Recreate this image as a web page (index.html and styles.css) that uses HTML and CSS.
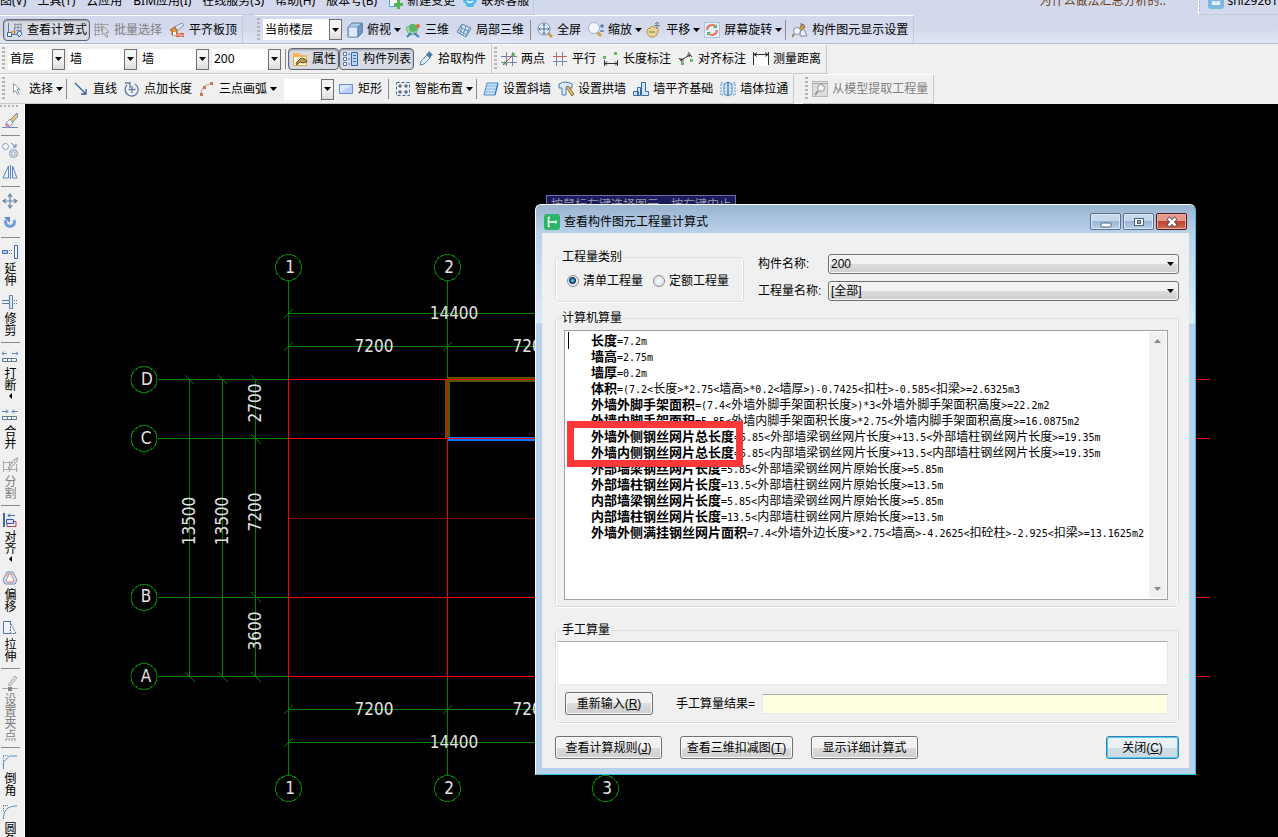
FILE: index.html
```html
<!DOCTYPE html>
<html lang="zh-CN">
<head>
<meta charset="utf-8">
<meta name="viewport" content="width=device-width, initial-scale=1">
<title>查看构件图元工程量计算式</title>
<link rel="stylesheet" href="styles.css">
</head>
<body>
<svg class="sprite" aria-hidden="true">
  <symbol id="caret" viewBox="0 0 7 4"><path d="M0 0h7L3.500 4z" fill="currentColor"/></symbol>
  <symbol id="new-doc" viewBox="0 0 16 16"><path d="M1.500 1v12.500h9V1" fill="#fff" stroke="#4d9fd8"/><path d="M9 7h3v3h3v3h-3v3H9v-3H6v-3h3z" fill="#4fb548"/></symbol>
  <symbol id="service" viewBox="0 0 16 16"><path d="M2 5h12l1 4-2 1-2 4H5l-2-4-2-1z" fill="#4dbbe9"/><path d="M5 8q3 3 6 0" fill="none" stroke="#fff" stroke-width="1.500"/></symbol>
  <symbol id="user" viewBox="0 0 16 16"><rect width="16" height="16" rx="3" fill="#7cb9dc"/><path d="M4 8h3l1 2 1-2h3v4H4z" fill="#e5f4fc"/></symbol>
  <symbol id="formula" viewBox="0 0 16 16"><path d="M1.500 1v12M1 12.500h14M7.500 6v6" stroke="#5578b6" fill="none"/><path d="M7 2.500h8M7 5.500h8M9 8.500h6M8 1v6M11 1v9M14 1v9" stroke="#8a94a8" fill="none"/><path d="M.5 10.500h4v4h-4zM10 11l3-2 2 3-3 3z" fill="#f3f8ff" stroke="#2e62b8"/><path d="M4 9h5v2H4z" fill="#e59b36"/></symbol>
  <symbol id="batch" viewBox="0 0 16 16"><path d="M1.500 1v13M4.500 1v10M7.500 1v8M0 2.500h15M0 5.500h9M0 8.500h9M0 12.500h6" stroke="#a0a0a6" fill="none"/><path d="M9 4l6 6-3 .5 2 4-2 .5-2-4-2 2z" fill="#ddd" stroke="#9a9aa0"/></symbol>
  <symbol id="level" viewBox="0 0 16 16"><path d="M5 5l8-4 2 2-7 6z" fill="#dfe8f7" stroke="#8292b8"/><path d="M1 8l5-3 2 3v5H3V9z" fill="#e3923a" stroke="#a9602a"/><path d="M4 10h3v3H4z" fill="#fff"/><path d="M7 11h8v4H7z" fill="#c9604e"/><path d="M7 13h8M10 11v2M12 13v2" stroke="#f2c4b0"/></symbol>
  <symbol id="cube" viewBox="0 0 16 16"><path d="M1 5l4-4h10v10l-4 4H1z" fill="#a9cbec" stroke="#5a7898"/><path d="M1.500 5h9.500v10H1.500z" fill="#dcebfb" stroke="#7f9fc2"/><path d="M11 5l4-4v10l-4 4z" fill="#6f9ccc" stroke="#5a7898"/></symbol>
  <symbol id="orbit" viewBox="0 0 16 16"><path d="M1 6l6-4 6 4-2 6-7 1z" fill="#a9d7a0" stroke="#6fae7c"/><circle cx="8" cy="6" r="4" fill="#57b66a"/><circle cx="13" cy="4" r="2" fill="#e06d3e"/><path d="M2 15l4-4M9 11l5 4" stroke="#3f7fc0" stroke-width="2"/></symbol>
  <symbol id="part3d" viewBox="0 0 16 16"><path d="M1 10l5-8 9 4-5 9z" fill="#d0e4f4" stroke="#5d87ad"/><path d="M4 5.500l9 4M6 3l-2 9M10 4l-3 9M13 6l-3 8M2 8l9 5" stroke="#6692b8" fill="none"/></symbol>
  <symbol id="fit" viewBox="0 0 16 16"><path d="M11 11l4 4" stroke="#c99a3e" stroke-width="2.500"/><circle cx="7" cy="7" r="6" fill="#eef4fc" stroke="#6e8eb8"/><path d="M7 2v10M2 7h10M5.500 3.500L7 2l1.500 1.500M5.500 10.500L7 12l1.500-1.500M3.500 5.500L2 7l1.500 1.500M10.500 5.500L12 7l-1.500 1.500" stroke="#446fa7" fill="none"/></symbol>
  <symbol id="zoom" viewBox="0 0 16 16"><path d="M9 10l4 4" stroke="#d5a445" stroke-width="3"/><circle cx="6" cy="6" r="5.500" fill="#f2f7fd" stroke="#9cb4d2"/><path d="M12 4h4M14 2v4M12 9h4" stroke="#5a81b5" stroke-width="1.500"/></symbol>
  <symbol id="pan" viewBox="0 0 16 16"><path d="M1 9c0-3 2-3 3-2 0-3 3-3 4-1 2-2 5 0 4 3-1 5-3 6-6 6S1 13 1 9z" fill="#ecd58d" stroke="#b2924a"/><path d="M11 0v7M8 3.500h6M9 2l2-2 2 2M3 10h6" stroke="#777d8e" fill="none"/></symbol>
  <symbol id="spin" viewBox="0 0 16 16"><rect x=".5" y=".5" width="15" height="15" fill="#e4eff7" stroke="#a8c6dc"/><path d="M3 8a5 5 0 0 1 9-3M13 8a5 5 0 0 1-9 3" fill="none" stroke="#e07858" stroke-width="2"/><path d="M13 2v4H9zM3 14v-4h4z" fill="#63af72"/></symbol>
  <symbol id="display" viewBox="0 0 16 16"><path d="M9 1l6 13H8z" fill="#eaf0f8" stroke="#7890b2"/><path d="M11 2l2 3-5 5-2-2z" fill="#d0a04a" stroke="#86662d"/><circle cx="5" cy="9" r="3.500" fill="#f4f9ff" stroke="#7892b7"/><path d="M2 12l-2 3" stroke="#9c7a4b" stroke-width="2"/></symbol>
  <symbol id="props" viewBox="0 0 16 16"><path d="M1.500 14.500v-12h5l1 2h7v10z" fill="#fff6dc" stroke="#e1a33d"/><path d="M1 2h6l1 2h7v2H1z" fill="#f3b54e"/><path d="M4 12l5-5 4 1 2 3-4 1-3-1-3 3z" fill="#b99a4f" stroke="#6c5729"/></symbol>
  <symbol id="list" viewBox="0 0 16 16"><path d="M.5 1.500h3v3h-3zM.5 6.500h3v3h-3zM.5 11.500h3v3h-3zM5 3h2M5 8h2M5 13h2" fill="#fff" stroke="#5474a5"/><path d="M8.500 1.500h6v13h-6z" fill="#bcd4f5" stroke="#3566aa"/><path d="M10 4.500h3M10 7.500h3M10 10.500h3" stroke="#3468b5"/></symbol>
  <symbol id="pick" viewBox="0 0 16 16"><path d="M2 14l1-4 6-6 3 3-6 6z" fill="#e2f1fb" stroke="#5286b4"/><path d="M8 3l2-1 1-2 4 4-2 1-1 3z" fill="#4f7ba8"/></symbol>
  <symbol id="two-pt" viewBox="0 0 16 16"><path d="M5.500 1v14M11.500 1v14M0 5.500h16M0 11.500h16" stroke="#7783a8"/><path d="M2 14L14 2" stroke="#b64545"/><circle cx="4" cy="12" r="1.700" fill="#55a855"/><circle cx="12" cy="4" r="1.700" fill="#55a855"/></symbol>
  <symbol id="parallel" viewBox="0 0 16 16"><path d="M4.500 1v14M10.500 1v14M1 10.500h14" stroke="#7783b0"/><path d="M1 5.500h14" stroke="#cf5b5b"/></symbol>
  <symbol id="length" viewBox="0 0 16 16"><path d="M1.500 9v6M14.500 9v6M2 12.500h12M4 10.500l-2 2 2 2M12 10.500l2 2-2 2" stroke="#333" fill="none"/><path d="M0 5h3v3H0zM11 1h3v3h-3z" fill="#64ba68"/></symbol>
  <symbol id="aligned" viewBox="0 0 16 16"><path d="M1 7l3 4M10 1l4 5M3 9l9-5M3 7v2h3M9 4h3l-1 2" stroke="#333" fill="none"/><path d="M3 11h3v3H3zM12 8h3v3h-3z" fill="#64ba68"/></symbol>
  <symbol id="measure" viewBox="0 0 16 16"><path d="M2 5h13v10H2z" fill="#fff"/><path d="M.5 1v13M15.500 1v13M1 3.500h14M4 1.500l-3 2 3 2M12 1.500l3 2-3 2" stroke="#333" fill="none"/></symbol>
  <symbol id="pointer" viewBox="0 0 16 16"><path d="M4.500 2.500v9l2-2 2 4 1.500-1-2-4h3z" fill="#fff" stroke="#8b9aac"/></symbol>
  <symbol id="line" viewBox="0 0 16 16"><path d="M2 2l11 11M13 8v5H8" stroke="#315fa2" fill="none" stroke-width="1.300"/></symbol>
  <symbol id="arc-len" viewBox="0 0 16 16"><path d="M3 4a6.500 6.500 0 1 0 8-1M1 2h5v5M8 5v7M4.500 8.500h7" stroke="#5c7ba6" fill="none" stroke-width="1.300"/></symbol>
  <symbol id="arc3" viewBox="0 0 16 16"><path d="M2 14C2 7 6 3 13 3" stroke="#96a0b5" fill="none"/><path d="M1 12h3v3H1zM4 5h3v3H4zM11 1h3v3h-3z" fill="#d37456"/></symbol>
  <symbol id="rect" viewBox="0 0 16 16"><path d="M1.500 3.500h13v9h-13z" fill="#b9d0fb" stroke="#6b8dd5"/><path d="M2 4h12L2 12z" fill="#d8e5ff"/></symbol>
  <symbol id="smart" viewBox="0 0 16 16"><path d="M1.500 1.500h13v13h-13z" fill="none" stroke="#426391" stroke-dasharray="3 2"/><path d="M5 3v4M3 5h4M11 3v4M9 5h4M5 9v4M3 11h4M11 9v4M9 11h4" stroke="#334d73"/></symbol>
  <symbol id="slant" viewBox="0 0 16 16"><path d="M1 14L4 2h11l-3 12z" fill="#c5e1f8" stroke="#4e8fc8"/><path d="M4 5h10M3 8h10M2 11h11" stroke="#82b5de"/><path d="M12 14l3-12" stroke="#326fa4"/></symbol>
  <symbol id="arch" viewBox="0 0 16 16"><path d="M1 3q7-4 13 0v4h-3q-2-3-3 0v7H4V7H1z" fill="#dbeaf8" stroke="#497bb0"/><path d="M8 6l2-1 6 8-2 2z" fill="#e7c072" stroke="#8e6a31"/></symbol>
  <symbol id="footing" viewBox="0 0 16 16"><path d="M.5 10.500h5v4h-5zM4.500 6.500h3v8h-3zM8.500 1.500h4v9h3v4h-7z" fill="#d3e5f8" stroke="#376ca7"/></symbol>
  <symbol id="through" viewBox="0 0 16 16"><path d="M3 2h-2v12h2M13 2h2v12h-2" fill="none" stroke="#4a91cd" stroke-dasharray="2 1"/><path d="M4 3l4-2v14l-4-2zM8 1l4 2v10l-4 2z" fill="#cfe6f9" stroke="#4a85b9"/></symbol>
  <symbol id="extract" viewBox="0 0 16 16"><path d="M.5.500h15v15H.5z" fill="#dedede" stroke="#b8b8b8"/><path d="M1 2.500h14" stroke="#aaa"/><circle cx="9" cy="7" r="3.500" fill="#f2f2f2" stroke="#969696"/><path d="M6 10l-3 4" stroke="#969696" stroke-width="2"/></symbol>
  <symbol id="erase" viewBox="0 0 16 16"><path d="M0 14.500h16" stroke="#6788b5"/><path d="M8 7l7-7 1 3-6 7z" fill="#e8c766" stroke="#7888a3"/><path d="M4 10l4-4 3 4-4 4z" fill="#edf3fc" stroke="#8396b5"/><path d="M3 11l2-1 3 3-2 2H4z" fill="#d08caf"/></symbol>
  <symbol id="copy" viewBox="0 0 16 16"><circle cx="3.500" cy="4.500" r="3" fill="#fff" stroke="#7d98b8"/><circle cx="11.500" cy="11.500" r="4" fill="#dfe6ef" stroke="#7d98b8"/><circle cx="11.500" cy="11.500" r="2" fill="none" stroke="#9fb2ca"/><path d="M9 1l5 4M14 2v3h-3" stroke="#517fb9" fill="none"/></symbol>
  <symbol id="mirror" viewBox="0 0 16 16"><path d="M6.500 2v12H1zM10.500 2v12H15z" fill="#edf4ff" stroke="#5d85bd"/><path d="M8.500 1v14" stroke="#5d85bd"/></symbol>
  <symbol id="move" viewBox="0 0 16 16"><path d="M8 1v14M1 8h14M6 4l2-3 2 3M6 12l2 3 2-3M4 6L1 8l3 2M12 6l3 2-3 2" stroke="#6484a8" fill="none" stroke-width="1.200"/></symbol>
  <symbol id="rotate" viewBox="0 0 16 16"><path d="M4 5a4.500 4.500 0 1 0 8 0" fill="none" stroke="#6d9be1" stroke-width="3"/><path d="M2 2h6v6z" fill="#5b89d2"/></symbol>
  <symbol id="extend" viewBox="0 0 16 16"><path d="M.5 6.500h5v3h-5z" fill="#b7cdf0" stroke="#3e6ca7"/><path d="M7 6.500h4M7 9.500h4" stroke="#56779f" stroke-dasharray="1 1"/><path d="M12.500 1.500h3v13h-3z" fill="#eef5ff" stroke="#3e6ca7"/></symbol>
  <symbol id="trim" viewBox="0 0 16 16"><path d="M0 6.500h7M0 9.500h7" stroke="#56779f"/><path d="M10 6.500h6M10 9.500h6" stroke="#56779f" stroke-dasharray="1 1"/><path d="M7.500 1.500h3v13h-3z" fill="#dce9f8" stroke="#5385ba"/></symbol>
  <symbol id="break" viewBox="0 0 16 16"><path d="M0 4.500h5M2 2.500l-2 2 2 2M10 4.500h6M14 2.500l2 2-2 2" stroke="#5983c5" fill="none"/><path d="M.5 9.500h14v3H.5zM5.500 9v4M9.500 9v4" fill="#fff" stroke="#58799c"/></symbol>
  <symbol id="join" viewBox="0 0 16 16"><path d="M0 4.500h6M4 2.500l2 2-2 2M16 4.500h-6M12 2.500l-2 2 2 2" stroke="#5983c5" fill="none"/><path d="M.5 9.500h14v3H.5zM5.500 9v4M9.500 9v4" fill="#fff" stroke="#58799c"/></symbol>
  <symbol id="split" viewBox="0 0 16 16"><path d="M1 5.500h9M1 12.500h15M1.500 4v11M7.500 4v11M14.500 7v8" stroke="#aaa"/><path d="M6 11l7-9 3-1-1 3-7 8z" fill="#e4e4e4" stroke="#999"/></symbol>
  <symbol id="align" viewBox="0 0 16 16"><path d="M2 1v14" stroke="#3f6998" stroke-width="2"/><path d="M6 3.500h7M8 1.500l-2 2 2 2" stroke="#4865b5" fill="none"/><path d="M4.500 7.500h7v4h-7z" fill="#dfe2ff" stroke="#384fc0"/><path d="M12 9.500h2v5H5v-3" fill="none" stroke="#b93b4b"/></symbol>
  <symbol id="offset" viewBox="0 0 16 16"><path d="M5 2h6l4 8-2 4H3l-2-4z" fill="#cfe3f3" stroke="#6d92b2" stroke-linejoin="round"/><path d="M6 4h4v3l2 3-1 2H5l-1-2 2-3z" fill="#fff" stroke="#df7373"/></symbol>
  <symbol id="stretch" viewBox="0 0 16 16"><path d="M9 1.500H1.500v12H9" fill="#f0f6ff" stroke="#4a78a9"/><path d="M8.500 1v4" stroke="#4a78a9"/><path d="M8.500 6v7M9 4l5 9.500H8" fill="none" stroke="#5377a0" stroke-dasharray="2 1"/></symbol>
  <symbol id="grip-pt" viewBox="0 0 16 16"><path d="M0 13.500h16" stroke="#aaa"/><path d="M6 12h4v4H6z" fill="#888"/><path d="M6 10l7-9 2 2-7 8z" fill="#ddd" stroke="#aaa"/></symbol>
  <symbol id="chamfer" viewBox="0 0 16 16"><path d="M1.500 15V8l6-6H15" stroke="#4f8fcc" fill="none"/><path d="M1 1.500h5M1.500 2v5" stroke="#5f86ab" stroke-dasharray="1 1"/></symbol>
  <symbol id="fillet" viewBox="0 0 16 16"><path d="M1.500 15c0-8 3-13 13.500-13" stroke="#4f8fcc" fill="none"/><path d="M1 1.500h5M1.500 2v5" stroke="#5f86ab" stroke-dasharray="1 1"/></symbol>
</svg>

<nav class="menu-row">
  <div class="menu">
    <button class="menu-item">图(V)</button>
    <button class="menu-item">工具(T)</button>
    <button class="menu-item">云应用</button>
    <button class="menu-item">BIM应用(I)</button>
    <button class="menu-item">在线服务(S)</button>
    <button class="menu-item">帮助(H)</button>
    <button class="menu-item">版本号(B)</button>
    <button class="menu-item"><svg class="icon"><use href="#new-doc"/></svg>新建变更</button>
    <button class="menu-item menu-service"><svg class="icon"><use href="#service"/></svg>联系客服</button>
  </div>
  <a class="faq" href="#">为什么做法汇总分析的..</a>
  <div class="account"><span class="grip"></span><button class="menu-item"><svg class="icon"><use href="#user"/></svg>shl29261</button></div>
</nav>

<div class="row row-blue">
  <div class="bar">
    <button class="tool pressed"><svg class="icon"><use href="#formula"/></svg>查看计算式</button>
    <button class="tool" disabled><svg class="icon"><use href="#batch"/></svg>批量选择</button>
    <button class="tool"><svg class="icon"><use href="#level"/></svg>平齐板顶</button>
  </div>
  <div class="bar bar-next">
    <span class="grip"></span>
    <span class="combo combo-view"><select aria-label="显示范围"><option>当前楼层</option></select><span class="combo-arrow"><svg class="caret"><use href="#caret"/></svg></span></span>
    <button class="tool"><svg class="icon"><use href="#cube"/></svg>俯视<svg class="caret"><use href="#caret"/></svg></button>
    <button class="tool"><svg class="icon"><use href="#orbit"/></svg>三维</button>
    <button class="tool"><svg class="icon"><use href="#part3d"/></svg>局部三维</button>
    <span class="sep"></span>
    <button class="tool"><svg class="icon"><use href="#fit"/></svg>全屏</button>
    <button class="tool"><svg class="icon"><use href="#zoom"/></svg>缩放<svg class="caret"><use href="#caret"/></svg></button>
    <button class="tool"><svg class="icon"><use href="#pan"/></svg>平移<svg class="caret"><use href="#caret"/></svg></button>
    <button class="tool"><svg class="icon"><use href="#spin"/></svg>屏幕旋转<svg class="caret"><use href="#caret"/></svg></button>
    <span class="sep"></span>
    <button class="tool"><svg class="icon"><use href="#display"/></svg>构件图元显示设置</button>
  </div>
</div>

<div class="row">
  <div class="bar">
    <span class="grip"></span>
    <span class="combo combo-floor"><select aria-label="楼层"><option>首层</option></select><span class="combo-arrow"><svg class="caret"><use href="#caret"/></svg></span></span>
    <span class="combo"><select aria-label="构件类别"><option>墙</option></select><span class="combo-arrow"><svg class="caret"><use href="#caret"/></svg></span></span>
    <span class="combo"><select aria-label="构件类型"><option>墙</option></select><span class="combo-arrow"><svg class="caret"><use href="#caret"/></svg></span></span>
    <span class="combo"><select aria-label="构件"><option>200</option></select><span class="combo-arrow"><svg class="caret"><use href="#caret"/></svg></span></span>
    <span class="sep"></span>
    <button class="tool pressed"><svg class="icon"><use href="#props"/></svg>属性</button>
    <button class="tool pressed"><svg class="icon"><use href="#list"/></svg>构件列表</button>
    <button class="tool"><svg class="icon"><use href="#pick"/></svg>拾取构件</button>
  </div>
  <div class="bar">
    <span class="grip"></span>
    <button class="tool"><svg class="icon"><use href="#two-pt"/></svg>两点</button>
    <button class="tool"><svg class="icon"><use href="#parallel"/></svg>平行</button>
    <button class="tool"><svg class="icon"><use href="#length"/></svg>长度标注</button>
    <button class="tool"><svg class="icon"><use href="#aligned"/></svg>对齐标注</button>
    <button class="tool"><svg class="icon"><use href="#measure"/></svg>测量距离</button>
  </div>
</div>

<div class="row">
  <div class="bar">
    <span class="grip"></span>
    <button class="tool"><svg class="icon"><use href="#pointer"/></svg>选择<svg class="caret"><use href="#caret"/></svg></button>
    <span class="sep"></span>
    <button class="tool"><svg class="icon"><use href="#line"/></svg>直线</button>
    <button class="tool"><svg class="icon"><use href="#arc-len"/></svg>点加长度</button>
    <button class="tool"><svg class="icon"><use href="#arc3"/></svg>三点画弧<svg class="caret"><use href="#caret"/></svg></button>
    <span class="combo combo-arc"><select aria-label="画弧方式"><option></option></select><span class="combo-arrow"><svg class="caret"><use href="#caret"/></svg></span></span>
    <button class="tool"><svg class="icon"><use href="#rect"/></svg>矩形</button>
    <span class="sep"></span>
    <button class="tool"><svg class="icon"><use href="#smart"/></svg>智能布置<svg class="caret"><use href="#caret"/></svg></button>
    <span class="sep"></span>
    <button class="tool"><svg class="icon"><use href="#slant"/></svg>设置斜墙</button>
    <button class="tool"><svg class="icon"><use href="#arch"/></svg>设置拱墙</button>
    <button class="tool"><svg class="icon"><use href="#footing"/></svg>墙平齐基础</button>
    <button class="tool"><svg class="icon"><use href="#through"/></svg>墙体拉通</button>
  </div>
  <div class="bar bar-next">
    <span class="grip"></span>
    <button class="tool" disabled><svg class="icon"><use href="#extract"/></svg>从模型提取工程量</button>
  </div>
</div>

<div class="workspace">
  <aside class="side">
    <span class="side-grip"></span>
    <button class="side-tool" aria-label="删除"><svg class="icon"><use href="#erase"/></svg></button>
    <span class="side-sep"></span>
    <button class="side-tool" aria-label="复制"><svg class="icon"><use href="#copy"/></svg></button>
    <button class="side-tool" aria-label="镜像"><svg class="icon"><use href="#mirror"/></svg></button>
    <span class="side-sep"></span>
    <button class="side-tool" aria-label="移动"><svg class="icon"><use href="#move"/></svg></button>
    <button class="side-tool" aria-label="旋转"><svg class="icon"><use href="#rotate"/></svg></button>
    <span class="side-sep"></span>
    <button class="side-tool named"><svg class="icon"><use href="#extend"/></svg><span class="vert">延伸</span></button>
    <button class="side-tool named"><svg class="icon"><use href="#trim"/></svg><span class="vert">修剪</span></button>
    <span class="side-sep"></span>
    <button class="side-tool named"><svg class="icon"><use href="#break"/></svg><span class="vert">打断</span><span class="side-more"></span></button>
    <button class="side-tool named"><svg class="icon"><use href="#join"/></svg><span class="vert">合并</span></button>
    <button class="side-tool named" disabled><svg class="icon"><use href="#split"/></svg><span class="vert">分割</span></button>
    <span class="side-sep"></span>
    <button class="side-tool named"><svg class="icon"><use href="#align"/></svg><span class="vert">对齐</span><span class="side-more"></span></button>
    <button class="side-tool named"><svg class="icon"><use href="#offset"/></svg><span class="vert">偏移</span></button>
    <button class="side-tool named"><svg class="icon"><use href="#stretch"/></svg><span class="vert">拉伸</span></button>
    <span class="side-sep"></span>
    <button class="side-tool named" disabled><svg class="icon"><use href="#grip-pt"/></svg><span class="vert">设置夹点</span></button>
    <span class="side-sep"></span>
    <button class="side-tool named"><svg class="icon"><use href="#chamfer"/></svg><span class="vert">倒角</span></button>
    <button class="side-tool named"><svg class="icon"><use href="#fillet"/></svg><span class="vert">圆角</span></button>
  </aside>

  <main class="canvas">
    <svg class="drawing" role="img" aria-label="轴网平面图">
      <g transform="translate(-25 -104)">
        <path class="axis" d="M288.500 281v98M447.500 281v98M288.500 676v99M447.500 676v99M605.500 676v99M157 379.500h131M157 438.500h131M157 597.500h131M157 676.500h131"/>
        <path class="axis" d="M288 313.500h317M288 346.500h317M288 709.500h317M288 742.500h317M189.500 379v297M222.500 379v297M255.500 379v297"/>
        <path class="axis" d="M284 318l9-9M284 351l9-9M443 351l9-9M284 714l9-9M443 714l9-9M284 747l9-9"/>
        <path class="axis" d="M185 375l9 9M218 375l9 9M251 375l9 9M251 434l10 10M251 592l10 10M185 672l10 10M218 672l10 10M251 672l10 10"/>
        <path class="wall" d="M447 379.500h563M447.500 379v59"/>
        <path class="picked" d="M447 439h160"/>
        <path class="grid" d="M288.500 379v298M447.500 379v298M288 379.500h922M288 438.500h922M288 597.500h922M288 676.500h922"/>
        <path class="grid-dim" d="M289 518.500h520"/>
        <circle class="bubble" cx="288.500" cy="267.500" r="13"/><circle class="bubble" cx="447.500" cy="267.500" r="13"/>
        <circle class="bubble" cx="144" cy="379.500" r="13"/><circle class="bubble" cx="144" cy="438.500" r="13"/>
        <circle class="bubble" cx="144" cy="597.500" r="13"/><circle class="bubble" cx="144" cy="676.500" r="13"/>
        <circle class="bubble" cx="288.500" cy="788.500" r="13"/><circle class="bubble" cx="447.500" cy="788.500" r="13"/><circle class="bubble" cx="605.500" cy="788.500" r="13"/>
        <g class="dim">
          <text x="290" y="273">1</text><text x="449" y="273">2</text>
          <text x="147" y="385">D</text><text x="146" y="444">C</text><text x="146" y="602">B</text><text x="146" y="682">A</text>
          <text x="290" y="794">1</text><text x="449" y="794">2</text><text x="607" y="794">3</text>
          <text x="454" y="319">14400</text><text x="374" y="352">7200</text><text x="532" y="352">7200</text>
          <text x="374" y="715">7200</text><text x="532" y="715">7200</text><text x="454" y="748">14400</text>
          <text transform="translate(261 403) rotate(-90)">2700</text>
          <text transform="translate(261 512) rotate(-90)">7200</text>
          <text transform="translate(261 631) rotate(-90)">3600</text>
          <text transform="translate(195 521) rotate(-90)">13500</text>
          <text transform="translate(228 521) rotate(-90)">13500</text>
        </g>
      </g>
    </svg>
    <div class="hint">按鼠标左键选择图元，按右键中止</div>

    <section class="dialog" role="dialog" aria-labelledby="dialog-title">
      <header class="titlebar">
        <svg class="app-icon" viewBox="0 0 16 16"><rect width="16" height="16" rx="3" fill="#2cb567"/><path d="M4.500 3v10M4.500 8h7.500M4 3.500h2M4 12.500h2M12 6.500v3" stroke="#fff" stroke-width="1.500" fill="none"/></svg>
        <h1 id="dialog-title">查看构件图元工程量计算式</h1>
        <div class="win-buttons">
          <button class="win" aria-label="最小化"><svg viewBox="0 0 12 12"><rect x="1" y="7" width="10" height="4" rx="1" fill="#fff" stroke="#53637a"/></svg></button>
          <button class="win" aria-label="最大化"><svg viewBox="0 0 12 12"><rect x="1.500" y="2.500" width="9" height="7" fill="#fff" stroke="#53637a"/><rect x="4.500" y="4.500" width="3" height="3" fill="#8ba9ce" stroke="#53637a"/></svg></button>
          <button class="win win-close" aria-label="关闭"><svg viewBox="0 0 12 12"><path d="M2 2l8 8M10 2l-8 8" stroke="#4d4250" stroke-width="4"/><path d="M2.500 2.500l7 7M9.500 2.500l-7 7" stroke="#fff" stroke-width="2.500"/></svg></button>
        </div>
      </header>
      <div class="client">
        <div class="top">
          <fieldset class="kind">
            <legend>工程量类别</legend>
            <div class="choices">
              <label class="choice"><input type="radio" name="kind" checked>清单工程量</label>
              <label class="choice"><input type="radio" name="kind">定额工程量</label>
            </div>
          </fieldset>
          <div class="fields">
            <label for="part">构件名称:</label>
            <span class="drop"><select id="part"><option>200</option></select><svg class="caret"><use href="#caret"/></svg></span>
            <label for="qty">工程量名称:</label>
            <span class="drop"><select id="qty"><option>[全部]</option></select><svg class="caret"><use href="#caret"/></svg></span>
          </div>
        </div>

        <fieldset class="auto">
          <legend>计算机算量</legend>
          <div class="result">
            <span class="text-caret"></span>
            <div class="lines">
              <p><b>长度</b><code>=7.2m</code></p>
              <p><b>墙高</b><code>=2.75m</code></p>
              <p><b>墙厚</b><code>=0.2m</code></p>
              <p><b>体积</b><code>=(7.2&lt;</code>长度<code>&gt;*2.75&lt;</code>墙高<code>&gt;*0.2&lt;</code>墙厚<code>&gt;)-0.7425&lt;</code>扣柱<code>&gt;-0.585&lt;</code>扣梁<code>&gt;=2.6325m3</code></p>
              <p><b>外墙外脚手架面积</b><code>=(7.4&lt;</code>外墙外脚手架面积长度<code>&gt;)*3&lt;</code>外墙外脚手架面积高度<code>&gt;=22.2m2</code></p>
              <p><b>外墙内脚手架面积</b><code>=5.85&lt;</code>外墙内脚手架面积长度<code>&gt;*2.75&lt;</code>外墙内脚手架面积高度<code>&gt;=16.0875m2</code></p>
              <p><b>外墙外侧钢丝网片总长度</b><code>=5.85&lt;</code>外部墙梁钢丝网片长度<code>&gt;+13.5&lt;</code>外部墙柱钢丝网片长度<code>&gt;=19.35m</code></p>
              <p><b>外墙内侧钢丝网片总长度</b><code>=5.85&lt;</code>内部墙梁钢丝网片长度<code>&gt;+13.5&lt;</code>内部墙柱钢丝网片长度<code>&gt;=19.35m</code></p>
              <p><b>外部墙梁钢丝网片长度</b><code>=5.85&lt;</code>外部墙梁钢丝网片原始长度<code>&gt;=5.85m</code></p>
              <p><b>外部墙柱钢丝网片长度</b><code>=13.5&lt;</code>外部墙柱钢丝网片原始长度<code>&gt;=13.5m</code></p>
              <p><b>内部墙梁钢丝网片长度</b><code>=5.85&lt;</code>内部墙梁钢丝网片原始长度<code>&gt;=5.85m</code></p>
              <p><b>内部墙柱钢丝网片长度</b><code>=13.5&lt;</code>内部墙柱钢丝网片原始长度<code>&gt;=13.5m</code></p>
              <p><b>外墙外侧满挂钢丝网片面积</b><code>=7.4&lt;</code>外墙外边长度<code>&gt;*2.75&lt;</code>墙高<code>&gt;-4.2625&lt;</code>扣砼柱<code>&gt;-2.925&lt;</code>扣梁<code>&gt;=13.1625m2</code></p>
            </div>
            <div class="scroll"><svg class="caret scroll-up"><use href="#caret"/></svg><svg class="caret"><use href="#caret"/></svg></div>
            <div class="mark"></div>
          </div>
        </fieldset>

        <fieldset class="manual">
          <legend>手工算量</legend>
          <textarea aria-label="手工算量"></textarea>
          <div class="manual-row">
            <button class="btn">重新输入(<u>R</u>)</button>
            <label for="sum">手工算量结果=</label>
            <input id="sum" type="text" readonly>
          </div>
        </fieldset>

        <footer class="actions">
          <button class="btn btn-rule">查看计算规则(<u>J</u>)</button>
          <button class="btn btn-3d">查看三维扣减图(<u>T</u>)</button>
          <button class="btn btn-rule">显示详细计算式</button>
          <button class="btn btn-default">关闭(<u>C</u>)</button>
        </footer>
      </div>
    </section>
  </main>
</div>
</body>
</html>
```
FILE: styles.css
```css
* { box-sizing: border-box; }
body {
  margin: 0;
  height: 100vh;
  display: flex;
  flex-direction: column;
  overflow: hidden;
  background: #f0f0f0;
  color: #000;
  font: 12px/16px "Noto Sans", "Noto Sans CJK SC", sans-serif;
}
button, select, input, textarea { font: inherit; color: inherit; }
button { border: 0; background: none; padding: 0; }
.sprite { display: none; }
.icon { width: 16px; height: 16px; flex: none; }
.caret { width: 7px; height: 4px; flex: none; }

/* menu */
.menu-row {
  display: flex;
  flex: none;
  height: 28px;
  margin-top: -13px;
  background: #d3d9ec;
  white-space: nowrap;
}
.menu { display: flex; gap: 11px; padding-right: 4px; border-right: 1px solid #c4c8d4; border-bottom: 1px solid #c4c8d4; }
.menu-item { display: flex; align-items: center; gap: 3px; }
.menu-service { margin-left: -4px; }
.faq { margin-left: auto; align-self: center; color: #6b3a12; text-decoration: none; }
.account { width: 80px; margin-left: 32px; display: flex; gap: 8px; overflow: hidden; border-left: 1px solid #fff; border-bottom: 1px solid #c4c8d4; }

/* toolbars */
.row { display: flex; flex: none; height: 30px; white-space: nowrap; }
.row-blue { height: 29px; background: linear-gradient(#d3d9ec 50%, #e2e6f5); border-bottom: 1px solid #b0b8d6; }
.bar {
  display: flex;
  align-items: center;
  padding: 0 2px 0 3px;
  border-top: 1px solid #fff;
  border-right: 1px solid #c8c8c8;
  border-bottom: 1px solid #c8c8c8;
}
.row-blue .bar { border-bottom: 0; }
.bar-next { margin-left: 9px; }
.row-blue .bar-next { margin-left: 12px; }
.grip { width: 3px; height: 24px; margin-left: -1px; align-self: center; background: repeating-linear-gradient(#b4b4b8 0 2px, transparent 2px 4px); }
.bar .grip + .combo { margin-left: 3px; }
.tool { display: flex; align-items: center; gap: 4px; height: 22px; padding: 0 3px 0 4px; }
.tool:has(.caret) { padding-right: 0; }
.tool .caret { margin-left: -1px; }
.tool:disabled, .side-tool:disabled { color: #808080; }
.pressed { border: 1px solid #62656e; border-radius: 4px; background: #d9dce4; box-shadow: inset 0 1px 2px #8e929c; padding: 0 2px 0 3px; }
.sep { width: 1px; height: 20px; margin: 0 2px 0 3px; background: #8a8a8a; }
.combo { display: flex; width: 69px; height: 21px; margin-right: 3px; background: #fff; }
.combo + .sep { margin-left: 1px; }
.combo select { flex: 1; min-width: 0; appearance: none; border: 0; padding: 0 0 0 2px; background: #fff; }
.combo-arrow { width: 13px; display: flex; align-items: center; justify-content: center; border: 1px solid #707070; background: linear-gradient(#f4f4f4 50%, #dcdcdc); }
.combo-view { width: 79px; margin-right: 1px; }
.combo-floor { width: 57px; }
.combo-arc { width: 50px; margin: 0 0 0 7px; }

/* workspace */
.workspace { display: flex; flex: 1; min-height: 0; }
.side {
  width: 25px;
  flex: none;
  display: flex;
  flex-direction: column;
  align-items: center;
  gap: 6px;
  padding: 1px 4px 0 0;
  overflow: hidden;
  border-right: 1px solid #fff;
}
.side-grip { width: 20px; height: 2px; flex: none; background: repeating-linear-gradient(90deg, #b4b4b8 0 2px, transparent 2px 4px); }
.side-sep { width: 19px; height: 1px; flex: none; background: #8a8a8a; }
.side-tool { display: flex; flex-direction: column; align-items: center; flex: none; }
.named { gap: 2px; }
.named + .named { margin-top: 2px; }
.vert { writing-mode: vertical-rl; line-height: 16px; font-family: "Noto Sans CJK SC", sans-serif; }
.side-more { border: 3px solid transparent; border-right-color: #000; border-left: 0; }

.canvas { position: relative; flex: 1; min-width: 0; overflow: hidden; background: #000; }
.drawing { display: block; width: 100%; height: 100%; shape-rendering: crispEdges; fill: none; }
.axis, .bubble { stroke: #008000; }
.grid { stroke: #f00; }
.grid-dim { stroke: #800000; }
.wall { stroke: #555500; stroke-width: 5; }
.picked { stroke: #0a78ff; stroke-width: 4; }
.dim { fill: #e4e4e4; font: 17px "DejaVu Sans Condensed", "DejaVu Sans", sans-serif; text-anchor: middle; }
.hint {
  position: absolute;
  left: 521px;
  top: 91px;
  padding: 0 4px;
  border: 1px solid #6c6ca8;
  background: #1b1a5e;
  color: #9a9aa8;
  font-family: "Noto Sans CJK SC", sans-serif;
}

/* dialog */
.dialog {
  position: absolute;
  left: 510px;
  top: 100px;
  width: 661px;
  padding: 0 6px 6px;
  border: 1px solid #35c4e4;
  border-top-color: #fff;
  border-left-color: #fff;
  border-radius: 6px 6px 0 0;
  background: linear-gradient(#9ab4d0, #b9d1ea 28px, #dfeaf7 118px, #b9d1ea 119px);
  font-family: "Liberation Sans", "Noto Sans CJK SC", sans-serif;
}
.titlebar { display: flex; align-items: center; height: 28px; padding: 5px 2px 0; gap: 4px; }
.app-icon { width: 16px; height: 16px; }
.titlebar h1 { margin: 0; font-size: 12px; font-weight: 400; }
.win-buttons { display: flex; gap: 2px; margin-left: auto; }
.win { display: flex; align-items: center; justify-content: center; width: 31px; height: 17px; border: 1px solid #5a708c; border-radius: 2px; background: linear-gradient(#c6d8ec 50%, #9ab8d8 50%, #b6cde6); box-shadow: inset 0 0 0 1px #dce8f4; }
.win svg { width: 12px; height: 12px; }
.win-close { border-color: #53151a; background: linear-gradient(#e2988a 50%, #bd4230 50%, #cf6b55); box-shadow: inset 0 0 0 1px #e9b0a6; }
.client { padding: 16px 10px 9px 13px; background: #f0f0f0; }
fieldset { min-width: 0; margin: 0; padding: 0; border: 1px solid #d5dfe5; border-radius: 3px; box-shadow: inset 1px 0 #fff, inset -1px 0 #fff, 0 1px #fff; }
legend { margin-left: 5px; padding: 0 1px; line-height: 16px; background: #f0f0f0; }
.top { display: flex; gap: 14px; }
.kind { width: 189px; height: 53px; padding-top: 8px; }
.choices { display: flex; gap: 10px; margin-left: 11px; }
.choice { display: flex; align-items: center; gap: 4px; height: 16px; white-space: nowrap; }
.choice input {
  appearance: none;
  width: 12px;
  height: 12px;
  margin: 0;
  border: 1px solid #8b8d8f;
  border-radius: 50%;
  background: radial-gradient(#fff, #d2d4d8);
}
.choice input:checked { background: radial-gradient(circle at 45% 45%, #8fe0ff 0, #17669c 2px, #0b3150 3px, #e8ecf0 4px); }
.fields { flex: 1; display: grid; grid-template-columns: 70px 1fr; row-gap: 7px; padding-top: 5px; align-content: start; align-items: center; }
.drop { display: flex; align-items: center; height: 20px; padding-right: 4px; border: 1px solid #707070; border-radius: 3px; background: linear-gradient(#f2f2f2 50%, #dcdcdc 50%, #cfcfcf); box-shadow: inset 0 0 0 1px #f8f8f8; }
.drop select { flex: 1; appearance: none; border: 0; padding: 0 2px; background: none; }
.auto { margin-top: 8px; padding: 4px 0 6px; }
.result { position: relative; display: flex; height: 270px; margin: 0 10px 0 8px; padding: 1px; background: #fff; border: 1px solid #a0a0a4; }
.text-caret { width: 1px; height: 17px; margin: 0 22px 0 2px; background: #000; }
.lines { flex: 1; min-width: 0; padding-top: 1px; white-space: nowrap; }
.lines p { margin: 0; line-height: 16px; height: 16px; }
.lines b { font-size: 13px; line-height: 16px; }
.lines code { font: 10px/16px "DejaVu Sans Mono", monospace; }
.scroll { display: flex; flex-direction: column; justify-content: space-between; align-items: center; width: 17px; padding: 7px 0; background: #f0f0f0; color: #888; }
.scroll-up { transform: rotate(180deg); }
.mark { position: absolute; left: 2px; top: 90px; width: 176px; height: 46px; border: 7px solid #fc3838; }
.manual { margin-top: 15px; padding: 3px 10px 7px 1px; }
.manual legend { margin-left: 4px; }
.manual textarea { display: block; width: 100%; height: 44px; resize: none; border: 1px solid #e3e9ef; border-top-color: #abadb3; background: #fff; }
.manual-row { display: flex; align-items: center; margin: 7px 0 0 8px; }
.manual-row .btn { width: 88px; }
.manual-row label { margin: 0 7px 0 23px; }
.manual-row input { flex: 1; min-width: 0; height: 20px; border: 1px solid #e3e9ef; border-top-color: #abadb3; background: #ffffe1; }
.actions { display: flex; gap: 18px; margin-top: 13px; }
.btn { height: 23px; border: 1px solid #707070; border-radius: 3px; background: linear-gradient(#f2f2f2 50%, #dcdcdc 50%, #cfcfcf); box-shadow: inset 0 0 0 1px #fbfbfb; white-space: nowrap; }
.btn-rule { width: 107px; }
.btn-3d { width: 113px; }
.btn-default { width: 73px; margin-left: auto; border-color: #3c7fb1; background: linear-gradient(#eaf0f4 50%, #cfdbe4 50%, #cddae2); box-shadow: inset 0 0 0 1px #43cdf5; }
```
